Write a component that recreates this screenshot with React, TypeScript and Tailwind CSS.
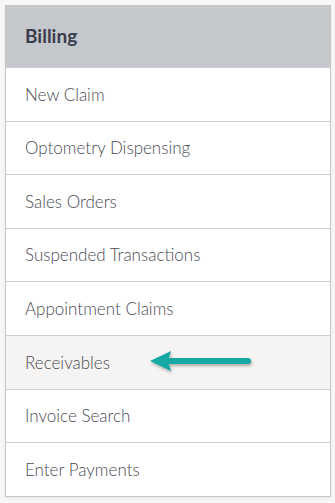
const items = [
  "New Claim",
  "Optometry Dispensing",
  "Sales Orders",
  "Suspended Transactions",
  "Appointment Claims",
  "Receivables",
  "Invoice Search",
  "Enter Payments",
];

function Arrow() {
  return (
    <svg width="112" height="28" viewBox="0 0 112 28" className="ml-[37px]">
      <defs>
        <filter id="sh" x="-10%" y="-30%" width="120%" height="180%">
          <feDropShadow dx="1" dy="2" stdDeviation="1.5" floodColor="#000" floodOpacity="0.3" />
        </filter>
      </defs>
      <g filter="url(#sh)">
        <line x1="22" y1="13" x2="101" y2="13" stroke="#12a8a4" strokeWidth="6" strokeLinecap="round" />
        <path d="M3 13 L24 3 L21 13 L24 23 Z" fill="#12a8a4" />
      </g>
    </svg>
  );
}

export default function App() {
  return (
    <div className="min-h-[503px] w-[335px] bg-[#f7f7f7] p-[5px] pr-[4px]" style={{ fontFamily: "Lato, 'Open Sans', sans-serif" }}>
      <div className="w-[326px] border border-[#c9c9c9] bg-white shadow-[0_1px_2px_rgba(0,0,0,0.08)]">
        <div className="flex h-[61px] items-center bg-[#c4c7cb] px-[19px]">
          <h2 className="text-[19px] font-bold text-[#3c3d4c]">Billing</h2>
        </div>
        {items.map((label) => (
          <div
            key={label}
            className={
              "flex h-[53.6px] items-center border-t border-[#cfcfcf] px-[19px] " +
              (label === "Receivables" ? "bg-[#f5f4f2]" : "bg-white")
            }
          >
            <span className="text-[17px] font-light text-[#4b4b55]">{label}</span>
            {label === "Receivables" && <Arrow />}
          </div>
        ))}
      </div>
    </div>
  );
}
